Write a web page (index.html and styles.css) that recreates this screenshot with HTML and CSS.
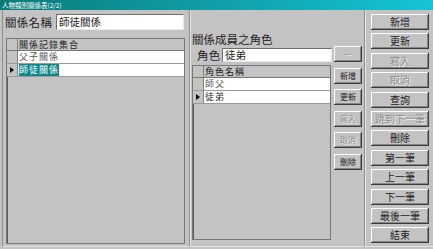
FILE: index.html
```html
<!DOCTYPE html>
<html>
<head>
  <meta charset="utf-8">
  <title>人物類別關係表</title>
  <link rel="stylesheet" href="styles.css">
</head>
<body>
  <div class="window">
    <div class="titlebar">人物類別關係表(2/2)</div>
    <div class="form">

      <div class="panel panel-left">
        <div class="field">
          <span class="label">關係名稱</span>
          <div class="input name-input">師徒關係</div>
        </div>
        <div class="grid grid-left">
          <div class="row head"><span class="sel"></span><span class="cell">關係記錄集合</span></div>
          <div class="row"><span class="sel"></span><span class="cell dim">父子關係</span></div>
          <div class="row"><span class="sel"><i class="arrow"></i></span><span class="cell"><span class="hl">師徒關係</span></span></div>
        </div>
      </div>

      <div class="panel panel-mid">
        <div class="mid-main">
          <div class="caption">關係成員之角色</div>
          <div class="field role">
            <span class="label">角色</span>
            <div class="input role-input">徒弟</div>
          </div>
          <div class="grid grid-right">
            <div class="row head"><span class="sel"></span><span class="cell">角色名稱</span></div>
            <div class="row"><span class="sel"></span><span class="cell dim">師父</span></div>
            <div class="row"><span class="sel"><i class="arrow"></i></span><span class="cell">徒弟</span></div>
          </div>
        </div>
        <div class="mini-buttons">
          <button class="btn mini" disabled>—</button>
          <button class="btn mini">新增</button>
          <button class="btn mini">更新</button>
          <button class="btn mini" disabled>寫入</button>
          <button class="btn mini" disabled>取消</button>
          <button class="btn mini">刪除</button>
        </div>
      </div>

      <div class="panel panel-right">
        <button class="btn big">新增</button>
        <button class="btn big">更新</button>
        <button class="btn big" disabled>寫入</button>
        <button class="btn big" disabled>取消</button>
        <button class="btn big">查詢</button>
        <button class="btn big" disabled>跳到下一筆</button>
        <button class="btn big">刪除</button>
        <button class="btn big">第一筆</button>
        <button class="btn big">上一筆</button>
        <button class="btn big">下一筆</button>
        <button class="btn big">最後一筆</button>
        <button class="btn big">結束</button>
      </div>

    </div>
  </div>
</body>
</html>
```

FILE: styles.css
```css
body {
  margin: 0;
  background: #c3c3c3;
  font-family: "Noto Sans CJK TC", "Noto Sans CJK SC", sans-serif;
  color: #1c1c1c;
}

.window {
  width: 433px;
  height: 249px;
  overflow: hidden;
}

.titlebar {
  height: 10px;
  background: linear-gradient(to right, #0a7b7b, #15c4d6);
  color: #fff;
  font-size: 6.5px;
  line-height: 10px;
  padding-left: 2px;
  white-space: nowrap;
}

.form {
  display: flex;
  height: 239px;
  padding-left: 2px;
  box-sizing: border-box;
}

.panel {
  box-sizing: border-box;
  height: 237px;
  border-left: 1px solid #8e8e8e;
  border-bottom: 1px solid #e2e2e2;
}

/* left panel */
.panel-left {
  width: 187px;
  padding: 4px 0 0 2px;
}

.field {
  display: flex;
  align-items: center;
  height: 16px;
}

.label {
  font-size: 11.5px;
  line-height: 16px;
  white-space: nowrap;
}

.field .label {
  width: 51px;
  letter-spacing: 0.3px;
}

.input {
  box-sizing: border-box;
  height: 16px;
  background: #fff;
  border-top: 1px solid #6e6e6e;
  border-left: 1px solid #6e6e6e;
  border-right: 1px solid #e8e8e8;
  border-bottom: 1px solid #e8e8e8;
  font-size: 10.5px;
  line-height: 14px;
  padding-left: 2px;
}

.name-input {
  width: 128px;
}

.grid {
  box-sizing: border-box;
  border: 1px solid #777;
  box-shadow: inset 1px 1px #5a5a5a;
}

.grid-left {
  width: 179px;
  height: 206px;
  margin: 8px 0 0 1px;
}

.row {
  display: flex;
  height: 12px;
  border-bottom: 1px solid #9a9a9a;
}

.row .sel {
  width: 10px;
  flex: none;
  border-right: 1px solid #808080;
  background: #c3c3c3;
  display: flex;
  align-items: center;
  justify-content: center;
}

.row .cell {
  flex: 1;
  background: #fff;
  font-size: 9px;
  line-height: 12px;
  letter-spacing: 1px;
  padding-left: 1px;
  white-space: nowrap;
  overflow: hidden;
}

.row.head {
  height: 11px;
  border-bottom: 1px solid #777;
}

.row.head .cell {
  background: #c3c3c3;
  line-height: 11px;
  color: #222;
}

.cell.dim {
  color: #555;
}

.hl {
  display: inline-block;
  background: #0c8888;
  color: #fff;
}

.arrow {
  width: 0;
  height: 0;
  border-left: 4px solid #000;
  border-top: 3px solid transparent;
  border-bottom: 3px solid transparent;
}

/* middle panel */
.panel-mid {
  width: 175px;
  display: flex;
  padding-left: 2px;
  box-shadow: inset 1px 0 #e8e8e8;
}

.mid-main {
  width: 140px;
  padding-top: 23px;
}

.caption {
  font-size: 11.5px;
  line-height: 13px;
  white-space: nowrap;
}

.field.role {
  height: 14px;
  margin-top: 2px;
}

.field.role .label {
  width: 25px;
  padding-left: 5px;
}

.role-input {
  width: 110px;
  height: 14px;
  line-height: 12px;
}

.grid-right {
  width: 139px;
  height: 175px;
  margin-top: 3px;
}

.mini-buttons {
  display: flex;
  flex-direction: column;
  gap: 5.6px;
  margin-left: 2px;
  padding-top: 36px;
}

/* right panel */
.panel-right {
  width: 69px;
  display: flex;
  flex-direction: column;
  gap: 3.4px;
  padding: 4px 0 0 6px;
  box-shadow: inset 1px 0 #e8e8e8;
}

/* buttons */
.btn {
  box-sizing: border-box;
  height: 16px;
  margin: 0;
  padding: 0;
  border: none;
  background: #c3c3c3;
  box-shadow: inset -1px -1px #3c3c3c, inset 1px 1px #fff, inset -2px -2px #858585;
  font-family: "Noto Sans CJK TC", "Noto Sans CJK SC", sans-serif;
  color: #1c1c1c;
  white-space: nowrap;
}

.btn.big {
  width: 58px;
  font-size: 10px;
  line-height: 14px;
}

.btn.mini {
  width: 28px;
  font-size: 8px;
  line-height: 14px;
}

.btn:disabled {
  color: #8c8c8c;
  text-shadow: 1px 1px #f4f4f4;
}
```
